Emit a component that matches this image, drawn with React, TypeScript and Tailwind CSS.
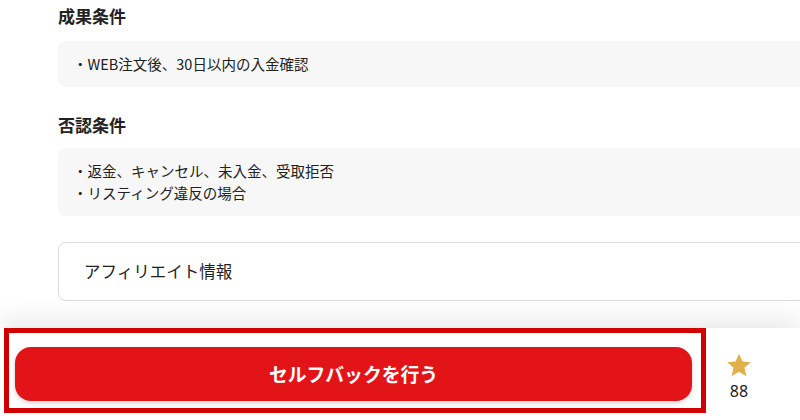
import React from "react";

const jp = '"Noto Sans CJK JP", "Noto Sans", sans-serif';

export default function App() {
  return (
    <div
      className="relative w-[800px] h-[420px] overflow-hidden bg-white text-[#222]"
      style={{ fontFamily: jp }}
    >
      <div className="pl-[58px] pt-[4px] w-[800px]">
        <h2 className="text-[17px] leading-[24px] font-bold">成果条件</h2>
        <div className="mt-[13px] h-[46px] w-[780px] rounded-[8px] bg-[#f7f7f7] flex items-center pl-[15px] text-[14.5px] leading-[22px]">
          ・WEB注文後、30日以内の入金確認
        </div>
        <h2 className="mt-[26px] text-[17px] leading-[24px] font-bold">否認条件</h2>
        <div className="mt-[11px] w-[780px] rounded-[8px] bg-[#f7f7f7] py-[12px] pl-[15px] text-[14.5px] leading-[22px]">
          <p>・返金、キャンセル、未入金、受取拒否</p>
          <p>・リスティング違反の場合</p>
        </div>
        <div className="mt-[26px] h-[59px] w-[780px] rounded-[8px] border border-[#dcdcdc] flex items-center pl-[25px] text-[16.5px]">
          アフィリエイト情報
        </div>
      </div>

      <div className="absolute left-0 right-0 bottom-0 h-[92px] bg-white shadow-[0_-8px_24px_rgba(0,0,0,0.09)] flex items-center">
        <div className="relative w-[706px] h-full flex items-center pl-[15px] pr-[14px]">
          <button
            className="w-full h-[54px] rounded-[16px] bg-[#e31418] text-white text-[18.8px] font-bold shadow-[0_2px_4px_rgba(0,0,0,0.18)]"
            style={{ fontFamily: jp }}
          >
            セルフバックを行う
          </button>
          <div className="absolute left-[4px] top-0 w-[702px] h-[85px] border-[5px] border-[#d00000] pointer-events-none" />
        </div>
        <div className="w-[66px] flex flex-col items-center pt-[4px]">
          <svg width="28" height="27" viewBox="0 0 24 24">
            <path
              d="M12 1.5l3.1 6.9 7.4.7-5.6 5 1.7 7.4L12 17.6l-6.6 3.9 1.7-7.4-5.6-5 7.4-.7z"
              fill="#e2b04a"
            />
          </svg>
          <span className="mt-[3px] text-[16px] leading-[18px]" style={{ fontFamily: '"Noto Sans", sans-serif' }}>
            88
          </span>
        </div>
      </div>
    </div>
  );
}
